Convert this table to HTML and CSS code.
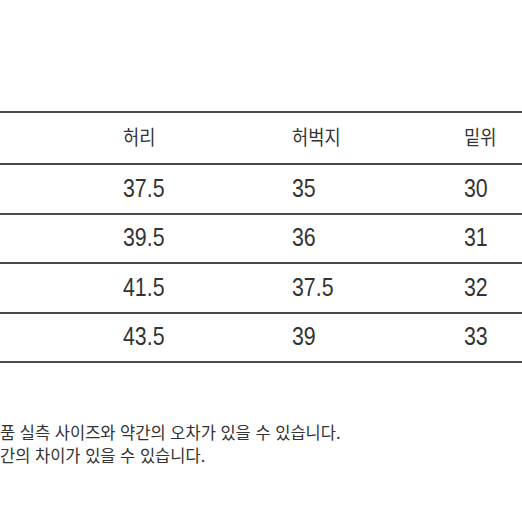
FILE: index.html
```html
<!DOCTYPE html>
<html lang="ko">
<head>
<meta charset="utf-8">
<link rel="stylesheet" href="styles.css">
</head>
<body>
<div class="page">
  <div class="table">
    <div class="row head">
      <span class="cell"></span>
      <span class="cell"><span class="txt ko">허리</span></span>
      <span class="cell"><span class="txt ko">허벅지</span></span>
      <span class="cell"><span class="txt ko">밑위</span></span>
    </div>
    <div class="row">
      <span class="cell"></span>
      <span class="cell"><span class="txt">37.5</span></span>
      <span class="cell"><span class="txt">35</span></span>
      <span class="cell"><span class="txt">30</span></span>
    </div>
    <div class="row">
      <span class="cell"></span>
      <span class="cell"><span class="txt">39.5</span></span>
      <span class="cell"><span class="txt">36</span></span>
      <span class="cell"><span class="txt">31</span></span>
    </div>
    <div class="row">
      <span class="cell"></span>
      <span class="cell"><span class="txt">41.5</span></span>
      <span class="cell"><span class="txt">37.5</span></span>
      <span class="cell"><span class="txt">32</span></span>
    </div>
    <div class="row">
      <span class="cell"></span>
      <span class="cell"><span class="txt">43.5</span></span>
      <span class="cell"><span class="txt">39</span></span>
      <span class="cell"><span class="txt">33</span></span>
    </div>
  </div>
  <div class="notes">
    <p>품 실측 사이즈와 약간의 오차가 있을 수 있습니다.</p>
    <p>간의 차이가 있을 수 있습니다.</p>
  </div>
</div>
</body>
</html>
```

FILE: styles.css
```css
html, body {
  margin: 0;
  padding: 0;
  background: #ffffff;
}

.page {
  width: 522px;
  height: 522px;
  overflow: hidden;
  padding-top: 111px;
  box-sizing: border-box;
}

.table {
  border-top: 2px solid #4a4a4a;
}

.row {
  display: grid;
  grid-template-columns: 123px 169px 172px 1fr;
  height: 45.5px;
  padding-bottom: 2px;
  border-bottom: 2px solid #4a4a4a;
  align-items: center;
}

.row.head {
  height: 47px;
  padding-bottom: 3px;
}

.cell {
  display: block;
  white-space: nowrap;
}

.txt {
  display: inline-block;
  font-family: "Liberation Sans", Arial, sans-serif;
  font-size: 26px;
  line-height: 26px;
  color: #333333;
  transform: scaleX(0.82);
  transform-origin: left center;
}

.txt.ko {
  font-family: "Noto Sans CJK KR", sans-serif;
  font-size: 20px;
  transform: scaleX(0.88);
}

.notes {
  margin-top: 58px;
  font-family: "Noto Sans CJK KR", sans-serif;
  font-size: 16.5px;
  line-height: 23px;
  color: #333333;
}

.notes p {
  margin: 0;
  white-space: nowrap;
}
```
